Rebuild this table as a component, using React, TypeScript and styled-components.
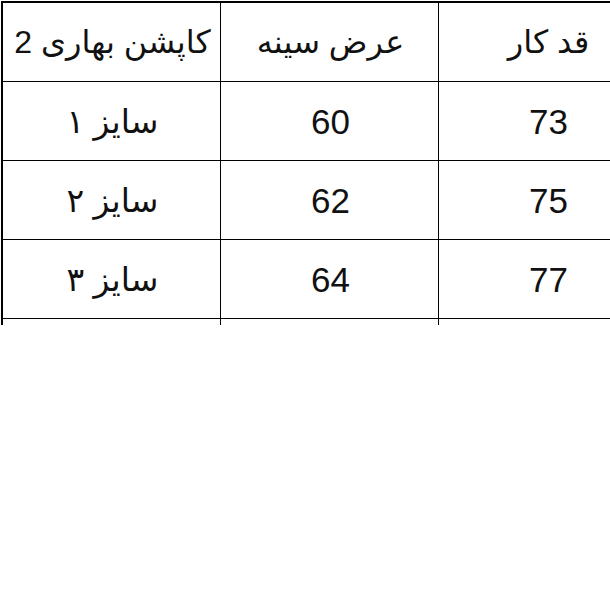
import styled, { createGlobalStyle } from "styled-components";

const GlobalStyle = createGlobalStyle`
  html, body {
    margin: 0;
    padding: 0;
    background: #ffffff;
    overflow: hidden;
  }
`;

const Page = styled.div`
  padding: 1px 0 0 1px;
  width: 610px;
  height: 610px;
  overflow: hidden;
  background: #ffffff;
`;

const Table = styled.table`
  border-collapse: separate;
  border-spacing: 0;
  table-layout: fixed;
  width: 656px;
  border-top: 2px solid #000;
  border-left: 2px solid #000;
  font-family: "Liberation Sans", "DejaVu Sans", sans-serif;
  color: #111;
`;

const Row = styled.tr<{ $stub?: boolean }>`
  height: ${(p) => (p.$stub ? "6px" : "79px")};
`;

const Cell = styled.td<{ $stub?: boolean; $size?: number }>`
  width: 218px;
  padding: 0;
  font-size: ${(p) => p.$size ?? 35}px;
  text-align: center;
  vertical-align: middle;
  border-right: 1px solid #000;
  border-bottom: ${(p) => (p.$stub ? "none" : "1px solid #000")};
  box-sizing: border-box;
  line-height: 1;
`;

const header = ["کاپشن بهاری 2", "عرض سینه", "قد کار"];

const rows = [
  ["سایز ۱", "60", "73"],
  ["سایز ۲", "62", "75"],
  ["سایز ۳", "64", "77"],
];

export default function App() {
  return (
    <Page>
      <GlobalStyle />
      <Table>
        <tbody>
          <Row>
            {header.map((h) => (
              <Cell key={h} dir="rtl" $size={32}>
                {h}
              </Cell>
            ))}
          </Row>
          {rows.map((r) => (
            <Row key={r[0]}>
              {r.map((c, i) => (
                <Cell key={i} dir="rtl" $size={i === 0 ? 33 : 35}>
                  {c}
                </Cell>
              ))}
            </Row>
          ))}
          <Row $stub>
            <Cell $stub />
            <Cell $stub />
            <Cell $stub />
          </Row>
        </tbody>
      </Table>
    </Page>
  );
}
